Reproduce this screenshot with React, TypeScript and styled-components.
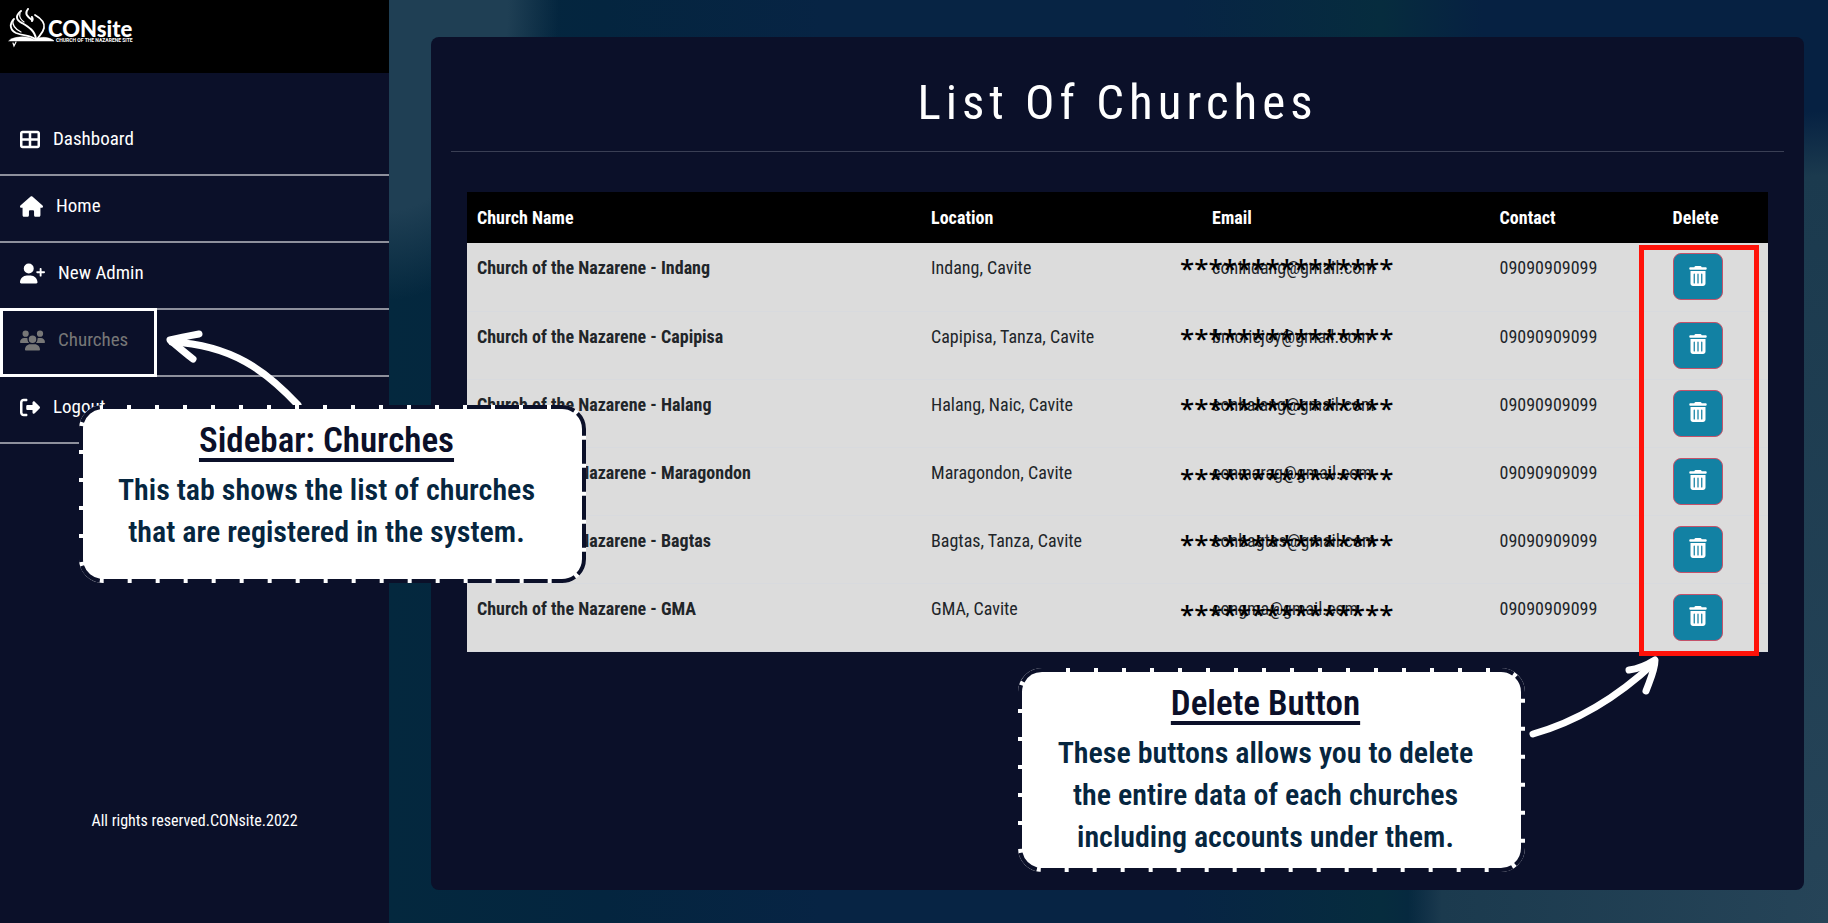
import React from 'react';
import styled, { createGlobalStyle } from 'styled-components';
import type { IconType } from 'react-icons';
import {
  FaHouse,
  FaRightFromBracket,
  FaTableCellsLarge,
  FaTrashCan,
  FaUserPlus,
  FaUsers,
} from 'react-icons/fa6';

const navy = '#0b1029';

const GlobalStyle = createGlobalStyle`
  *, *::before, *::after { box-sizing: border-box; }
  body {
    margin: 0;
    background: ${navy};
    font-family: "Roboto Condensed", Roboto, "Liberation Sans", sans-serif;
    font-size: 18px;
    line-height: 30px;
  }
`;

const Page = styled.div`
  position: relative;
  display: flex;
  min-height: 100vh;
`;

/* ---------- sidebar ---------- */

const Sidebar = styled.aside`
  display: flex;
  flex-direction: column;
  flex: 0 0 389px;
  background: ${navy};
  color: #fff;
`;

const Brand = styled.a`
  display: flex;
  align-items: flex-start;
  height: 73px;
  padding: 8px;
  background: #000;
  color: #fff;
  text-decoration: none;
`;

const BrandMark = styled.svg`
  width: 48px;
  height: 40px;
`;

const BrandWords = styled.span`
  display: flex;
  flex-direction: column;
  margin-left: -8px;
  padding-top: 12px;
  font-family: Lato, "Liberation Sans", sans-serif;
  font-weight: 900;
`;

const BrandName = styled.span`
  font-size: 22px;
  line-height: 18px;
`;

const BrandTag = styled.span`
  padding-left: 8px;
  font-family: Roboto, "Liberation Sans", sans-serif;
  font-size: 5px;
  font-weight: 700;
  line-height: 4px;
  white-space: nowrap;
`;

const NavList = styled.ul`
  margin: 36px 0 0;
  padding: 0;
  list-style: none;
`;

const NavItem = styled.li`
  position: relative;
  height: 67px;
  border-bottom: 2px solid #8e909c;
`;

const NavLink = styled.a<{ $current?: boolean; $iconWidth: number }>`
  display: flex;
  align-items: center;
  gap: 13px;
  padding: 15px 20px 20px;
  color: ${(p) => (p.$current ? '#777' : '#fff')};
  font-size: 19px;
  text-decoration: none;

  svg {
    width: ${(p) => p.$iconWidth}px;
    height: 21px;
  }
`;

const NavFrame = styled.span`
  position: absolute;
  inset: -2px auto -2px 0;
  width: 157px;
  border: 3px solid #fff;
  pointer-events: none;
`;

const Copyright = styled.footer`
  margin-top: auto;
  padding-bottom: 87px;
  font-size: 16px;
  text-align: center;
`;

/* ---------- main panel ---------- */

const Main = styled.main`
  display: flex;
  flex: 1;
  min-width: 0;
  padding: 37px 24px 33px 42px;
  background:
    radial-gradient(ellipse 170px 300px at 0 0, #1f3f54 70%, transparent 100%),
    radial-gradient(ellipse 420px 812px at 100% 100%, #264458 0%, #1b3a4e 92%, transparent 100%),
    linear-gradient(90deg, #04283e 0%, #04253f 15%, #072444 30%, #072444 55%, #062c3e 69%, #062142 76%, #062142 100%);
`;

const Panel = styled.section`
  flex: 1;
  min-width: 0;
  padding: 36px 20px;
  border-radius: 8px;
  background: ${navy};
`;

const Title = styled.h1`
  margin: 0;
  padding-bottom: 18px;
  border-bottom: 1px solid #3a3f54;
  color: #fff;
  font-size: 49px;
  font-weight: 400;
  line-height: 60px;
  letter-spacing: 5px;
  text-align: center;
`;

const TableArea = styled.div`
  position: relative;
  margin: 40px 16px 0;
`;

const Table = styled.table`
  width: 100%;
  border-collapse: collapse;
  table-layout: fixed;
  background: #dcdcdc;
  color: #212529;
  text-align: left;
`;

const Col = styled.col<{ $share: number }>`
  width: ${(p) => p.$share}%;
`;

const HeadCell = styled.th`
  height: 51px;
  padding: 11px 10px 10px;
  background: #000;
  color: #fff;
  font-weight: 700;
`;

const Row = styled.tr`
  height: 68px;
  border-bottom: 1px solid #d8dade;
`;

const Cell = styled.td`
  padding: 10px;
  vertical-align: top;
`;

const NameCell = styled.th`
  padding: 10px;
  font-weight: 700;
  vertical-align: top;
`;

const DeleteButton = styled.button`
  display: flex;
  align-items: center;
  justify-content: center;
  width: 50px;
  height: 47px;
  padding: 0 0 2px;
  border: 1px solid #c4526a;
  border-radius: 8px;
  background: #1281a3;
  color: #fff;
  cursor: pointer;

  svg {
    width: 20px;
    height: 20px;
  }
`;

/* ---------- tutorial annotations ---------- */

const Masks = styled.div<{ $top: number }>`
  position: absolute;
  top: ${(p) => p.$top}px;
  left: 54.8%;
  display: grid;
  grid-auto-rows: 70px;
  color: #000;
  font-family: "Open Sans", "Noto Sans", sans-serif;
  font-size: 26px;
  font-weight: 600;
  line-height: 36px;
  pointer-events: none;
`;

const DeleteFrame = styled.div`
  position: absolute;
  inset: 53px 9px -4px auto;
  width: 120px;
  border: 5px solid #ff1209;
  pointer-events: none;
`;

const Callout = styled.section<{ $left: number; $top: number; $height: number }>`
  position: absolute;
  left: ${(p) => p.$left}px;
  top: ${(p) => p.$top}px;
  width: 507px;
  height: ${(p) => p.$height}px;
  padding: 11px 22px 0 10px;
  border-radius: 24px;
  background: #fff;
  color: #06263f;
  font-size: 30px;
  font-weight: 600;
  line-height: 42px;
  text-align: center;
`;

const CalloutTitle = styled.h2`
  margin: 0 0 3px;
  color: ${navy};
  font-size: 35px;
  font-weight: 600;
  line-height: 50px;
  text-decoration: underline;
  text-decoration-thickness: 4px;
  text-underline-offset: 6px;
  text-decoration-skip-ink: none;
`;

const CalloutText = styled.p`
  margin: 0;
`;

const Stitching = styled.svg`
  position: absolute;
  inset: 0;
  width: 100%;
  height: 100%;
  overflow: visible;

  rect {
    x: 2px;
    y: 2px;
    width: calc(100% - 4px);
    height: calc(100% - 4px);
    rx: 22px;
    fill: none;
    stroke: ${navy};
    stroke-width: 4px;
    stroke-dasharray: 24 4;
  }
`;

const Arrow = styled.svg<{ $left: number; $top: number }>`
  position: absolute;
  left: ${(p) => p.$left}px;
  top: ${(p) => p.$top}px;
  fill: none;
  stroke: #fff;
  stroke-width: 7px;
  stroke-linecap: round;
  stroke-linejoin: round;
  pointer-events: none;
`;

const navItems: { label: string; icon: IconType; iconWidth: number; current?: boolean }[] = [
  { label: 'Dashboard', icon: FaTableCellsLarge, iconWidth: 20 },
  { label: 'Home', icon: FaHouse, iconWidth: 23 },
  { label: 'New Admin', icon: FaUserPlus, iconWidth: 25 },
  { label: 'Churches', icon: FaUsers, iconWidth: 25, current: true },
  { label: 'Logout', icon: FaRightFromBracket, iconWidth: 20 },
];

const churches = [
  { name: 'Indang', location: 'Indang, Cavite', email: 'conindang@gmail.com' },
  { name: 'Capipisa', location: 'Capipisa, Tanza, Cavite', email: 'bmcriejoy@gmail.com' },
  { name: 'Halang', location: 'Halang, Naic, Cavite', email: 'conhalang@gmail.com' },
  { name: 'Maragondon', location: 'Maragondon, Cavite', email: 'conmarag@gmail.com' },
  { name: 'Bagtas', location: 'Bagtas, Tanza, Cavite', email: 'conbagtas@gmail.com' },
  { name: 'GMA', location: 'GMA, Cavite', email: 'congma@gmail.com' },
];

const columnShares = [34.9, 21.6, 22.1, 13.3, 8.1];
const mask = '*'.repeat(15);

function Logo() {
  return (
    <Brand href="#" aria-label="CONsite">
      <BrandMark viewBox="0 0 48 40" fill="none" stroke="#fff" strokeLinecap="round">
        <path d="M6 11C1 16 2 22 8 25c8 3 15 2 19 6" strokeWidth="1.8" />
        <path d="M5 12c-1 5 2 9 8 12" strokeWidth="1.2" />
        <path d="M13 3c-6 5-5 9 1 12 7 4 13 8 14 16" strokeWidth="2" />
        <path d="M12 5c-1 4 1 7 4 9" strokeWidth="1.2" />
        <path d="M20 1c-4 5 0 8 4 11 M24 9c1 2 1 3 0 4" strokeWidth="2" />
        <path d="M27 7c7 4 10 8 9 13-1 5-4 7-7 11" strokeWidth="1.8" />
        <path d="M3 31c8-3 17-3 24 1 6-4 13-3 18 0l1 1H1z" fill="#fff" strokeWidth="0.5" />
        <path d="M8 34l-2 4-1-3" strokeWidth="1.2" />
      </BrandMark>
      <BrandWords>
        <BrandName>CONsite</BrandName>
        <BrandTag>CHURCH OF THE NAZARENE SITE</BrandTag>
      </BrandWords>
    </Brand>
  );
}

export default function App() {
  return (
    <Page>
      <GlobalStyle />
      <Sidebar>
        <Logo />
        <nav>
          <NavList>
            {navItems.map(({ label, icon: Icon, iconWidth, current }) => (
              <NavItem key={label}>
                <NavLink
                  href="#"
                  $current={current}
                  $iconWidth={iconWidth}
                  aria-current={current ? 'page' : undefined}
                >
                  <Icon aria-hidden />
                  {label}
                </NavLink>
                {current && <NavFrame />}
              </NavItem>
            ))}
          </NavList>
        </nav>
        <Copyright>All rights reserved.CONsite.2022</Copyright>
      </Sidebar>

      <Main>
        <Panel>
          <Title>List Of Churches</Title>
          <TableArea>
            <Table>
              <colgroup>
                {columnShares.map((share, i) => (
                  <Col key={i} $share={share} />
                ))}
              </colgroup>
              <thead>
                <tr>
                  <HeadCell scope="col">Church Name</HeadCell>
                  <HeadCell scope="col">Location</HeadCell>
                  <HeadCell scope="col">Email</HeadCell>
                  <HeadCell scope="col">Contact</HeadCell>
                  <HeadCell scope="col">Delete</HeadCell>
                </tr>
              </thead>
              <tbody>
                {churches.map((c) => (
                  <Row key={c.name}>
                    <NameCell scope="row">Church of the Nazarene - {c.name}</NameCell>
                    <Cell>{c.location}</Cell>
                    <Cell>{c.email}</Cell>
                    <Cell>09090909099</Cell>
                    <Cell>
                      <DeleteButton type="button" aria-label={`Delete ${c.name}`}>
                        <FaTrashCan aria-hidden />
                      </DeleteButton>
                    </Cell>
                  </Row>
                ))}
              </tbody>
            </Table>
            <Masks $top={58}>
              <span>{mask}</span>
              <span>{mask}</span>
              <span>{mask}</span>
              <span>{mask}</span>
            </Masks>
            <Masks $top={334}>
              <span>{mask}</span>
              <span>{mask}</span>
            </Masks>
            <DeleteFrame />
          </TableArea>
        </Panel>
      </Main>

      <Arrow $left={160} $top={325} width="150" height="90" viewBox="0 0 150 90" aria-hidden>
        <path d="M138 80C106 46 72 20 12 17" />
        <path d="M39 9C28 11 18 13 10 15c7 6 14 12 23 19" />
      </Arrow>
      <Arrow $left={1520} $top={645} width="150" height="100" viewBox="0 0 150 100" aria-hidden>
        <path d="M13 89C66 74 104 46 134 18" />
        <path d="M109 25C118 24 127 20 135 15c0 10-5 20-9 31" />
      </Arrow>

      <Callout $left={79} $top={405} $height={178}>
        <Stitching aria-hidden>
          <rect />
        </Stitching>
        <CalloutTitle>Sidebar: Churches</CalloutTitle>
        <CalloutText>
          This tab shows the list of churches
          <br />
          that are registered in the system.
        </CalloutText>
      </Callout>

      <Callout $left={1018} $top={668} $height={204}>
        <Stitching aria-hidden>
          <rect />
        </Stitching>
        <CalloutTitle>Delete Button</CalloutTitle>
        <CalloutText>
          These buttons allows you to delete
          <br />
          the entire data of each churches
          <br />
          including accounts under them.
        </CalloutText>
      </Callout>
    </Page>
  );
}
